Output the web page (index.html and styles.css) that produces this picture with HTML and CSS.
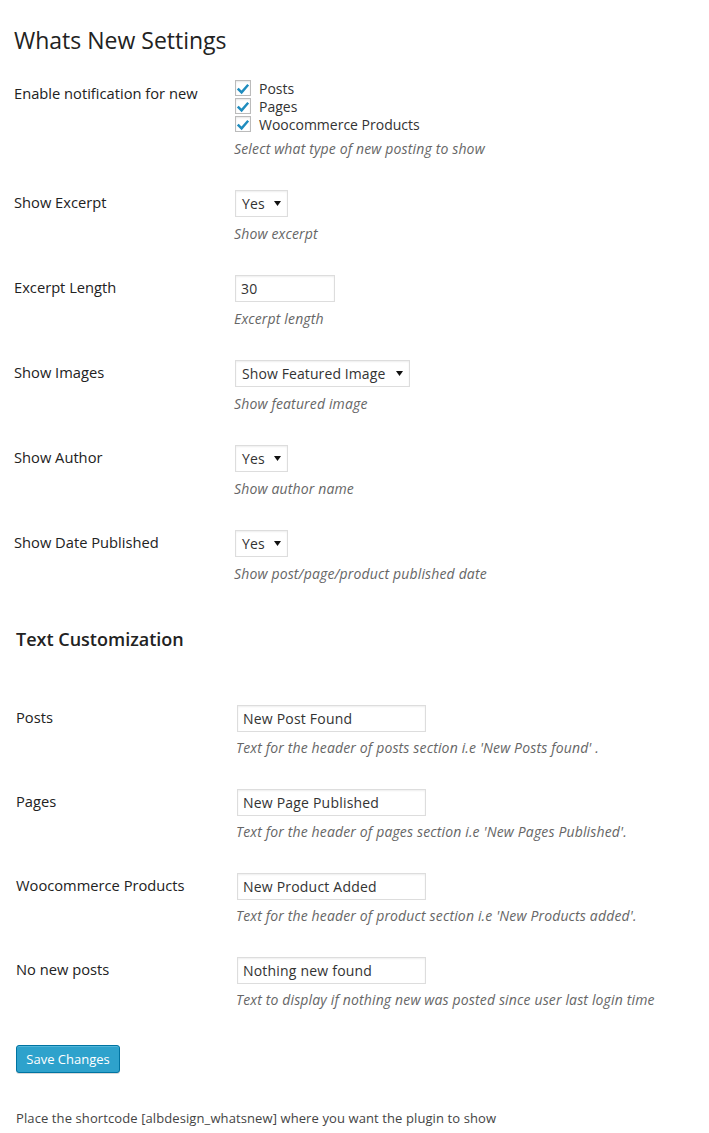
FILE: index.html
```html
<!DOCTYPE html>
<html>
<head>
<meta charset="utf-8">
<link rel="stylesheet" href="styles.css">
</head>
<body>
<div class="wrap">
  <h2 class="title">Whats New Settings</h2>

  <div class="table">
    <div class="row row-first">
      <div class="th">Enable notification for new</div>
      <div class="td">
        <div class="checks">
          <label class="check"><span class="box"><svg viewBox="0 0 16 16" width="16" height="16"><path d="M3.6 8.4 L6.6 11.4 L12.4 4.6" fill="none" stroke="#1e8cbe" stroke-width="2.4" stroke-linecap="square"/></svg></span>Posts</label>
          <label class="check"><span class="box"><svg viewBox="0 0 16 16" width="16" height="16"><path d="M3.6 8.4 L6.6 11.4 L12.4 4.6" fill="none" stroke="#1e8cbe" stroke-width="2.4" stroke-linecap="square"/></svg></span>Pages</label>
          <label class="check"><span class="box"><svg viewBox="0 0 16 16" width="16" height="16"><path d="M3.6 8.4 L6.6 11.4 L12.4 4.6" fill="none" stroke="#1e8cbe" stroke-width="2.4" stroke-linecap="square"/></svg></span>Woocommerce Products</label>
        </div>
        <p class="desc">Select what type of new posting to show</p>
      </div>
    </div>

    <div class="row">
      <div class="th">Show Excerpt</div>
      <div class="td">
        <span class="select sel-yes">Yes<svg class="arrow" viewBox="0 0 7 5" width="7" height="5"><path d="M0 0 H7 L3.5 5 Z" fill="#111"/></svg></span>
        <p class="desc">Show excerpt</p>
      </div>
    </div>

    <div class="row">
      <div class="th">Excerpt Length</div>
      <div class="td">
        <span class="input input-small">30</span>
        <p class="desc">Excerpt length</p>
      </div>
    </div>

    <div class="row">
      <div class="th">Show Images</div>
      <div class="td">
        <span class="select sel-wide">Show Featured Image<svg class="arrow" viewBox="0 0 7 5" width="7" height="5"><path d="M0 0 H7 L3.5 5 Z" fill="#111"/></svg></span>
        <p class="desc">Show featured image</p>
      </div>
    </div>

    <div class="row">
      <div class="th">Show Author</div>
      <div class="td">
        <span class="select sel-yes">Yes<svg class="arrow" viewBox="0 0 7 5" width="7" height="5"><path d="M0 0 H7 L3.5 5 Z" fill="#111"/></svg></span>
        <p class="desc">Show author name</p>
      </div>
    </div>

    <div class="row">
      <div class="th">Show Date Published</div>
      <div class="td">
        <span class="select sel-yes">Yes<svg class="arrow" viewBox="0 0 7 5" width="7" height="5"><path d="M0 0 H7 L3.5 5 Z" fill="#111"/></svg></span>
        <p class="desc">Show post/page/product published date</p>
      </div>
    </div>
  </div>

  <h3 class="subtitle">Text Customization</h3>

  <div class="table table2">
    <div class="row row2">
      <div class="th">Posts</div>
      <div class="td">
        <span class="input input-text">New Post Found</span>
        <p class="desc">Text for the header of posts section i.e 'New Posts found' .</p>
      </div>
    </div>
    <div class="row row2">
      <div class="th">Pages</div>
      <div class="td">
        <span class="input input-text">New Page Published</span>
        <p class="desc">Text for the header of pages section i.e 'New Pages Published'.</p>
      </div>
    </div>
    <div class="row row2">
      <div class="th">Woocommerce Products</div>
      <div class="td">
        <span class="input input-text">New Product Added</span>
        <p class="desc">Text for the header of product section i.e 'New Products added'.</p>
      </div>
    </div>
    <div class="row row2">
      <div class="th">No new posts</div>
      <div class="td">
        <span class="input input-text">Nothing new found</span>
        <p class="desc">Text to display if nothing new was posted since user last login time</p>
      </div>
    </div>
  </div>

  <button class="btn">Save Changes</button>

  <p class="note">Place the shortcode [albdesign_whatsnew] where you want the plugin to show</p>
</div>
</body>
</html>
```

FILE: styles.css
```css
html, body {
  margin: 0;
  padding: 0;
  background: #fff;
}
body {
  font-family: "Open Sans", "Noto Sans", sans-serif;
  font-size: 13px;
  color: #444;
}
.wrap {
  padding-left: 14px;
}
.title {
  margin: 26px 0 11px;
  font-size: 23px;
  font-weight: 400;
  line-height: 29px;
  color: #222;
}
.table {
  display: flex;
  flex-direction: column;
}
.row {
  display: grid;
  grid-template-columns: 220px 1fr;
  height: 85px;
  box-sizing: border-box;
  padding-top: 15px;
}
.row-first {
  height: 109px;
}
.row2 {
  height: 84px;
}
.th {
  margin-top: 2px;
  font-size: 14.7px;
  line-height: 20px;
  color: #222;
}
.td {
  display: flex;
  flex-direction: column;
  align-items: flex-start;
}
.checks {
  display: flex;
  flex-direction: column;
  margin-top: -2px;
}
.check {
  display: flex;
  align-items: center;
  height: 18px;
  font-size: 14px;
  color: #333;
}
.box {
  width: 14px;
  height: 14px;
  border: 1px solid #bbb;
  background: #fff;
  box-shadow: inset 0 1px 2px rgba(0,0,0,0.1);
  margin: 0 8px 0 1px;
  display: flex;
  align-items: center;
  justify-content: center;
  overflow: hidden;
}
.box svg {
  flex: none;
  margin-top: 1px;
}
.desc {
  margin: 7px 0 0;
  font-size: 14px;
  letter-spacing: 0.15px;
  line-height: 19px;
  font-style: italic;
  color: #666;
}
.row-first .desc {
  margin-top: 6px;
}
.row2 .desc {
  margin-top: 6px;
}
.select {
  position: relative;
  display: flex;
  align-items: center;
  box-sizing: border-box;
  height: 27px;
  margin-left: 1px;
  padding-left: 6px;
  border: 1px solid #ddd;
  box-shadow: inset 0 1px 2px rgba(0,0,0,0.07);
  background: #fff;
  font-size: 14px;
  letter-spacing: 0.1px;
  color: #333;
}
.sel-yes {
  width: 53px;
}
.sel-wide {
  width: 175px;
}
.arrow {
  position: absolute;
  right: 6px;
  top: 10px;
}
.input {
  display: flex;
  align-items: center;
  box-sizing: border-box;
  height: 27px;
  margin-left: 1px;
  padding-left: 5px;
  border: 1px solid #ddd;
  box-shadow: inset 0 1px 2px rgba(0,0,0,0.07);
  background: #fff;
  font-size: 14px;
  letter-spacing: 0.2px;
  color: #333;
}
.input-small {
  width: 100px;
}
.input-text {
  width: 189px;
}
.subtitle {
  margin: 28px 0 39px 2px;
  font-size: 18px;
  font-weight: 600;
  line-height: 23px;
  color: #222;
}
.table2 {
  margin-left: 2px;
}
.btn {
  display: block;
  margin: 19px 0 0 2px;
  height: 28px;
  padding: 0 0 1px;
  box-sizing: border-box;
  width: 104px;
  white-space: nowrap;
  text-align: center;
  background: #2ea2cc;
  border: 1px solid #0074a2;
  border-radius: 3px;
  box-shadow: inset 0 1px 0 rgba(120,200,230,0.5), 0 1px 0 rgba(0,0,0,0.15);
  color: #fff;
  font-family: "Open Sans", "Noto Sans", sans-serif;
  font-size: 13px;
  line-height: 26px;
}
.note {
  margin: 36px 0 0 2px;
  font-size: 13px;
  letter-spacing: 0.1px;
  line-height: 19px;
  color: #444;
}
```
